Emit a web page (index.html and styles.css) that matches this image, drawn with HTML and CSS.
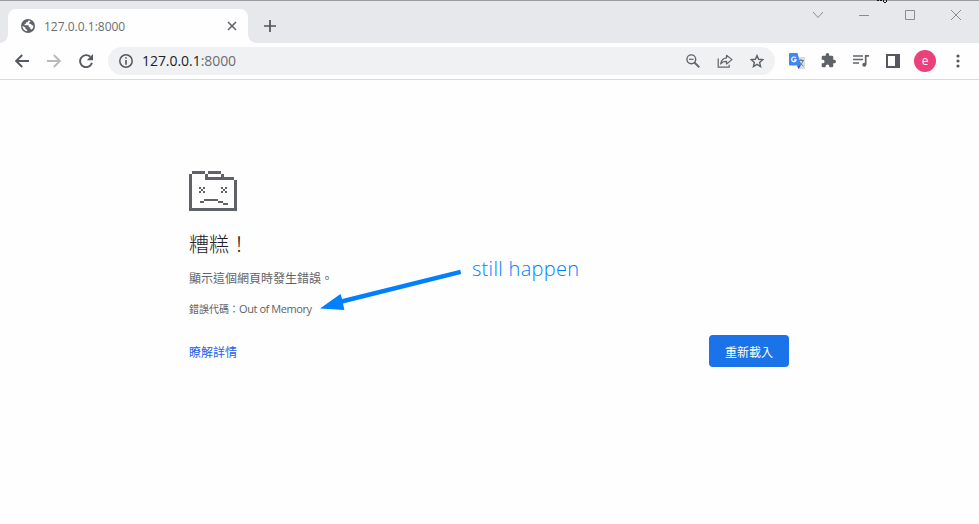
FILE: index.html
```html
<!DOCTYPE html>
<html lang="zh-Hant">
<head>
<meta charset="utf-8">
<title>127.0.0.1:8000</title>
<link rel="stylesheet" href="styles.css">
</head>
<body>
<header class="tabstrip">
  <div class="tab">
    <svg class="globe" width="14" height="14" viewBox="0 0 14 14"><circle cx="7" cy="7" r="7" fill="#5f6368"/><path d="M7.6 1.5 6.500 3.2H5v1.6H3.6v1.4h4.100v2H9l.4 1.9 1.2.5c1.2-1 1.9-2.4 1.7-4.2l-1.5-.2-.8-1.3H8.400V3.2L10 2.1a6 6 0 0 0-2.400-.6ZM1.500 6.800l3 2v1.3l1.700.7v1.5C3.500 12 1.300 9.500 1.500 6.800Z" fill="#fff"/></svg>
    <span class="tab-title">127.0.0.1:8000</span>
    <svg class="tab-close" width="10" height="10" viewBox="0 0 10 10"><path d="m1 1 8 8m0-8-8 8" stroke="#5f6368" stroke-width="1.6"/></svg>
  </div>
  <svg class="new-tab" width="12" height="12" viewBox="0 0 12 12"><path d="M6 0v12M0 6h12" stroke="#505359" stroke-width="1.7"/></svg>
  <div class="window-buttons">
    <svg width="12" height="12" viewBox="0 0 12 12"><path d="m1 3 5 5.500L11 3"/></svg>
    <svg width="12" height="12" viewBox="0 0 12 12"><path d="M1 6.500h10"/></svg>
    <svg width="12" height="12" viewBox="0 0 12 12"><path d="M1.500 1.500h9v9h-9z"/></svg>
    <svg width="12" height="12" viewBox="0 0 12 12"><path d="m1 1 10 10m0-10L1 11"/></svg>
  </div>
  <svg class="cursor-tip" width="10" height="3" viewBox="0 0 10 3"><path d="M0 0h2v1H0zM3 0h2v1H3zM6 0h1v2H6zM9 0h1v2H9zM7 2h2v1H7z" fill="#111"/></svg>
</header>
<nav class="toolbar">
  <div class="nav-buttons">
    <svg width="14" height="14" viewBox="0 0 14 14"><path d="M14 7H1.400M7.200 1 1.200 7l6 6" fill="none" stroke="#55585e" stroke-width="1.900"/></svg>
    <svg width="14" height="14" viewBox="0 0 14 14"><path d="M0 7h12.600M6.800 1l6 6-6 6" fill="none" stroke="#b9babc" stroke-width="1.900"/></svg>
    <svg width="14" height="14" viewBox="0 0 14 14"><path d="M12.900 8.700A6 6 0 1 1 11.300 2.800" fill="none" stroke="#55585e" stroke-width="1.900"/><path d="M14 0v6.200H7.800z" fill="#55585e"/></svg>
  </div>
  <div class="omnibox">
    <svg width="14" height="14" viewBox="0 0 14 14"><circle cx="7" cy="7" r="6.200" fill="none" stroke="#55585e" stroke-width="1.500"/><path d="M6.200 3.300h1.600v1.500H6.200zm0 2.700h1.600v4.700H6.200z" fill="#55585e"/></svg>
    <span class="url">127.0.0.1<span class="port">:8000</span></span>
    <div class="page-actions">
      <svg width="14" height="14" viewBox="0 0 14 14" fill="none" stroke="#5f6368" stroke-width="1.400"><circle cx="5.300" cy="5.300" r="4.400"/><path d="M8.500 8.500 13.300 13.300" stroke-width="1.800"/><path d="M3 5.300h4.600" stroke-width="1.200"/></svg>
      <svg width="16" height="14" viewBox="0 0 16 14" fill="none" stroke="#5f6368" stroke-width="1.200"><path d="M1.200 4.500v8.700h11v-2.400"/><path d="M9.500 1.300 15 5.600 9.500 10V7.300C6.800 7.200 5 8 3.700 10c.4-3.500 2.400-5.700 5.800-6.100z" stroke-linejoin="round"/></svg>
      <svg width="14" height="14" viewBox="0 0 14 14"><path d="m7 1.600 1.600 3.700 4.300.3-3.300 2.800 1 4.200L7 10.400l-3.600 2.200 1-4.200-3.300-2.800 4.300-.3z" fill="none" stroke="#5f6368" stroke-width="1.400"/></svg>
    </div>
  </div>
  <div class="extensions">
    <svg width="16" height="16" viewBox="0 0 16 16"><path d="M6 4h9a1 1 0 0 1 1 1v11H9.500z" fill="#dcdcda"/><path d="M9 7.500h6M12 6v1.500M14 7.500c-.7 2.600-2 4.200-4 5.500m.5-4.200c.8 1.800 2 3 4 4.200" fill="none" stroke="#607d8b" stroke-width="1"/><path d="M1 0h7.500L12 12.500H1a1 1 0 0 1-1-1V1a1 1 0 0 1 1-1z" fill="#4285f4"/><path d="M8 12.500h4L9.500 16z" fill="#2559c4"/><path d="M6.800 4.900a2.300 2.300 0 1 0 .4 1.900H5" fill="none" stroke="#fff" stroke-width="1.200"/></svg>
    <svg class="puzzle" width="15" height="15" viewBox="1 1 22 22"><path d="M20.500 11H19V7a2 2 0 0 0-2-2h-4V3.500a2.500 2.500 0 0 0-5 0V5H4a2 2 0 0 0-2 2v3.800h1.500a2.700 2.700 0 0 1 0 5.400H2V20a2 2 0 0 0 2 2h3.800v-1.500a2.700 2.700 0 0 1 5.400 0V22H17a2 2 0 0 0 2-2v-4h1.500a2.500 2.500 0 0 0 0-5z" fill="#5f6368"/></svg>
    <svg class="media" width="17" height="14" viewBox="0 0 17 14"><path d="M0 2h10M0 5.500h10M0 9h6M12.700 10.500V1.900H16" fill="none" stroke="#5f6368" stroke-width="1.700"/><circle cx="11.300" cy="10.800" r="2" fill="#5f6368"/></svg>
    <svg class="panel" width="14" height="14" viewBox="0 0 14 14"><path d="M0 0h14v14H0zm2 2v10h7V2z" fill="#55585e" fill-rule="evenodd"/></svg>
    <span class="avatar">e</span>
    <svg class="menu" width="4" height="14" viewBox="0 0 4 14" fill="#55585e"><circle cx="2" cy="2" r="1.600"/><circle cx="2" cy="7" r="1.600"/><circle cx="2" cy="12" r="1.600"/></svg>
  </div>
</nav>
<main class="error-page">
  <svg class="sad-folder" width="48" height="40" viewBox="0 0 48 40" fill="#5f6368" shape-rendering="crispEdges"><path d="M3 0h13v3H3zM19 0h13v3H19zM32 3h3v3h-3zM16 3h3v3h-3zM16 6h29v3H16zM0 3h3v37H0zM45 9h3v31h-3zM3 37h42v3H3z"/><path d="M10 16h2v2h-2zm4 0h2v2h-2zm-2 2h2v2h-2zm-2 2h2v2h-2zm4 0h2v2h-2zM32 16h2v2h-2zm4 0h2v2h-2zm-2 2h2v2h-2zm-2 2h2v2h-2zm4 0h2v2h-2zM15 28h14v2H15zM11 30h4v2h-4zM29 30h5v2h-5zM34 32h5v2h-5z"/></svg>
  <h1>糟糕！</h1>
  <p class="message">顯示這個網頁時發生錯誤。</p>
  <p class="code">錯誤代碼：<span class="code-name">Out of Memory</span></p>
  <div class="actions"><a class="learn-more">瞭解詳情</a><button class="reload">重新載入</button></div>
</main>
<svg class="arrow" width="144" height="44" viewBox="0 0 144 44"><path d="m0 40.500 20.500-14.500 1.600 5.100L140.200 1.700l1 4.300L23 35.600l1.400 6.500z" fill="#0080ff"/></svg>
<span class="note">still happen</span>
</body>
</html>
```
FILE: styles.css
```css
* { box-sizing: border-box; }
body {
  margin: 0;
  height: 524px;
  overflow: hidden;
  position: relative;
  background: #fefefe;
  font-family: "Open Sans", "Noto Sans CJK TC", sans-serif;
}
svg { display: block; flex: none; }
.tabstrip {
  display: flex;
  position: relative;
  height: 43px;
  padding: 8px 0 0 8px;
  border-top: 1px solid #9c9ca2;
  background: #e7e8ec;
}
.tab {
  display: flex;
  align-items: center;
  position: relative;
  width: 240px;
  height: 34px;
  padding: 0 11px 0 13px;
  border-radius: 8px 8px 0 0;
  background: #fefefe;
}
.tab::before, .tab::after {
  content: "";
  position: absolute;
  bottom: 0;
  width: 8px;
  height: 8px;
}
.tab::before { left: -8px; background: radial-gradient(circle at 0 0, transparent 7.5px, #fefefe 8px); }
.tab::after { right: -8px; background: radial-gradient(circle at 100% 0, transparent 7.5px, #fefefe 8px); }
.tab-title { margin-left: 9px; color: #6a6d72; font-size: 12px; }
.tab-close { margin-left: auto; }
.new-tab { margin: 11px 0 0 16px; }
.window-buttons { display: flex; gap: 34px; height: 12px; margin: 0 17px 0 auto; }
.window-buttons svg { fill: none; stroke: #8b8c90; stroke-width: 1; }
.cursor-tip { position: absolute; left: 877px; top: -1px; }
.toolbar {
  display: flex;
  align-items: center;
  height: 37px;
  padding: 0 19px 1px 15px;
  border-bottom: 1px solid #d9dadc;
}
.nav-buttons { display: flex; gap: 18px; }
.omnibox {
  display: flex;
  align-items: center;
  width: 667px;
  height: 28px;
  margin-left: 15px;
  padding: 0 11px;
  border-radius: 14px;
  background: #f0f1f3;
}
.url { margin-left: 9px; color: #202124; font-size: 14px; letter-spacing: -0.05px; }
.port { color: #6a6d72; }
.page-actions { display: flex; gap: 17px; margin-left: auto; }
.extensions { display: flex; align-items: center; margin-left: 14px; }
.puzzle { margin-left: 16px; }
.media { margin-left: 17px; }
.panel { margin-left: 16px; }
.avatar {
  width: 22px;
  height: 22px;
  margin-left: 14px;
  border-radius: 50%;
  background: #ec407a;
  color: #fff;
  font-size: 12px;
  line-height: 21px;
  text-align: center;
}
.menu { margin-left: 20px; }
.error-page { width: 600px; margin: 91px 0 0 189px; color: #5f6368; }
h1 { margin: 18px 0 0; color: #202124; font-size: 20px; font-weight: 300; line-height: 32px; }
p { margin: 0; }
.message { margin-top: 8px; font-size: 12px; line-height: 20px; }
.code { margin-top: 10px; font-size: 10px; line-height: 20px; }
.code-name { font-size: 11px; letter-spacing: -0.42px; }
.actions { display: flex; justify-content: space-between; align-items: center; margin-top: 16px; }
.learn-more { padding-top: 1px; color: #2563eb; font-size: 12px; }
.reload {
  width: 80px;
  height: 32px;
  padding: 0;
  border: 0;
  border-radius: 4px;
  background: #1a73e8;
  color: #fff;
  font: 12px "Noto Sans CJK TC", sans-serif;
}
.arrow { position: absolute; left: 320px; top: 268px; }
.note {
  position: absolute;
  left: 472px;
  top: 254px;
  color: #0080ff;
  font-size: 20px;
  font-weight: 300;
  letter-spacing: 0.3px;
  line-height: 29px;
  white-space: nowrap;
}
```
